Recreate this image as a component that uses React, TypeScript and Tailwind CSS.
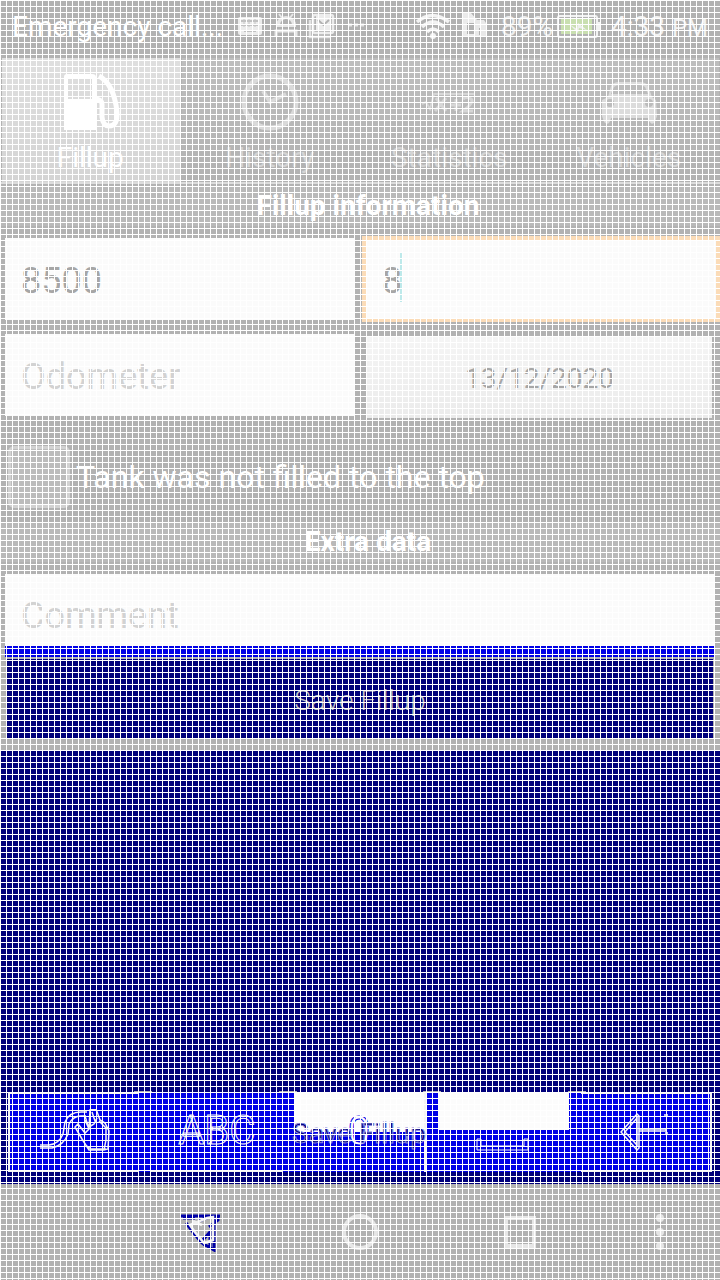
import type { ReactNode } from "react";

type TabProps = { label: string; active?: boolean; children: ReactNode };

function Tab({ label, active = false, children }: TabProps) {
  const look = active
    ? "bg-linear-to-b from-[#dfdfdf] to-[#d4d4d4] text-white"
    : "bg-linear-to-b from-[#bebebe] to-[#b2b2b2] text-[#d4d4d4]";
  return (
    <button
      role="tab"
      aria-selected={active}
      className={`flex flex-1 flex-col items-center border-r border-[#b2b2b2] pt-3 pr-0.5 text-[28px] leading-8 ${look}`}
    >
      <svg viewBox="0 0 64 64" className="size-16" fill="none" aria-hidden="true">
        {children}
      </svg>
      <span className="mt-2">{label}</span>
    </button>
  );
}

function StatusBar() {
  return (
    <header className="flex h-[58px] items-center pb-1 pr-3 pl-3 text-[28px] text-white">
      <span className="w-[224px] whitespace-nowrap">Emergency call...</span>
      <svg viewBox="0 0 134 32" className="h-8 w-[134px] shrink-0" fill="none" aria-hidden="true">
        <rect x="2" y="6" width="24" height="18" rx="2" fill="#ececec" />
        <path d="M5 10h18M5 14h18M8 20h12" stroke="#b2b2b2" strokeWidth="1.500" />
        <path d="M8 8v8M13 8v8M19 8v8" stroke="#c4c4c4" strokeWidth="1" />
        <path d="M40 14a10 9 0 0 1 20 0v2H40z" fill="#e8e8e8" />
        <path d="M43 3l4 5M57 3l-4 5" stroke="#e8e8e8" strokeWidth="2" />
        <path d="M44 14a6 6 0 0 1 12 0z" fill="#b2b2b2" />
        <path d="M40 26v-6h20v6" stroke="#e8e8e8" strokeWidth="3" />
        <path d="M74 9v17h20" stroke="#e4e4e4" strokeWidth="2.500" />
        <rect x="77" y="4" width="20" height="18" rx="2" stroke="#ececec" strokeWidth="2.500" />
        <path d="M80 4h15v15H80z" fill="#ececec" />
        <path d="M82 9l5.500 5L93 9" stroke="#b2b2b2" strokeWidth="2" />
        <path d="M113 14h3M119 14h3M125 14h3" stroke="#e4e4e4" strokeWidth="3" />
      </svg>
      <span className="flex-1" />
      <svg viewBox="0 0 76 32" className="mr-2.5 h-8 w-[76px] shrink-0" fill="none" aria-hidden="true">
        <path d="M2 11q15-13 32 0M7 16q11-10 22 0M12 21q6-6 12 0" stroke="#f2f2f2" strokeWidth="3.500" />
        <circle cx="18" cy="25" r="3" fill="#f2f2f2" />
        <path d="M47 2h9l6 7v17H47z" fill="#ececec" />
        <path d="M52 12h8v11h-8z" fill="#b2b2b2" />
        <path d="M61 9h8l2 3v14H59V11z" fill="#e8e8e8" />
        <path d="M64 17h2v7h-2z" fill="#b2b2b2" />
      </svg>
      <span className="text-[#ececec]">89%</span>
      <svg viewBox="0 0 44 24" className="mr-2.5 ml-1 h-6 w-11 shrink-0" fill="none" aria-hidden="true">
        <rect x="1" y="1" width="39" height="21" rx="2" stroke="#f2f2f2" strokeWidth="2" />
        <path d="M41 7h3v9h-3z" fill="#f2f2f2" />
        <rect x="4" y="4" width="31" height="15" fill="#c9dfb0" />
        <path d="M12 9l8 5 1-6 9 7-8-2-1 5z" fill="#eeeeee" />
      </svg>
      <span className="whitespace-nowrap text-[#f2f2f2]">
        4:33 <span className="text-2xl">PM</span>
      </span>
    </header>
  );
}

function SectionTitle({ children }: { children: ReactNode }) {
  return (
    <h2 className="bg-[#b9b9b9] pl-4 text-center text-[28px] leading-10 font-bold text-white">
      {children}
    </h2>
  );
}

function Keyboard() {
  const key = "relative flex items-center justify-center";
  const tick = "h-px w-[18px] bg-[#b2b2b2]";
  return (
    <section aria-label="Keyboard" className="flex flex-1 flex-col justify-end bg-[#00007a] px-2 pb-3">
      <div aria-hidden="true" className="flex justify-around px-[63px]">
        <span className={tick} />
        <span className={tick} />
        <span className={tick} />
        <span className={tick} />
      </div>
      <div className="grid h-20 grid-cols-5 gap-x-3 bg-[#0000e6]">
        <button aria-label="Gesture input" className={`${key} border-y-2 border-l-2 border-[#f4f4f4]`}>
          <svg viewBox="0 0 74 46" className="h-[46px] w-[74px]" fill="none" stroke="#f4f4f4" strokeWidth="1.500" aria-hidden="true">
            <path d="M2 36h9q10-1 14-11l2-12q4-10 16-10h6M2 39h12q12-3 16-14l1-10q4-8 12-8h5" />
            <path d="M47 7l4 13 1-19 6-1 4 11 5 3 4 8-1 18-4 1H51L44 30l-7-12 3-3 7 9 4-4-4-9M51 18l5-3 3-6M49 37l4 3h15M54 3l3 9M61 12l7 7v12l-2 10" />
          </svg>
        </button>
        <button className={`${key} border-b-2 border-[#f4f4f4] text-[40px] text-[#0000e6] [-webkit-text-stroke:1px_#f4f4f4]`}>
          ABC
        </button>
        <button aria-label="0" className={`${key} border-r-2 border-[#f4f4f4] bg-linear-to-b from-[#fcfcfc] from-50% to-[#0000e6] to-50%`}>
          <span className="text-[40px] text-[#fcfcfc] [-webkit-text-stroke:1px_#0000e6]">0</span>
          <span className="absolute inset-x-0 top-7 flex justify-center text-[28px] leading-7 whitespace-nowrap text-[#00007a] [-webkit-text-stroke:1px_#8888dd]">
            Save Fillup
          </span>
        </button>
        <button aria-label="Space" className={`${key} bg-linear-to-b from-[#fcfcfc] from-48% to-[#0000e6] to-48%`}>
          <svg viewBox="0 0 54 14" className="mt-6 h-3.5 w-[54px]" fill="none" stroke="#f4f4f4" strokeWidth="1" aria-hidden="true">
            <path d="M1 2v11h51V2h-4v7H5V2z" />
          </svg>
        </button>
        <button aria-label="Backspace" className={`${key} border-2 border-l-0 border-[#f4f4f4]`}>
          <svg viewBox="0 0 50 38" className="h-[38px] w-[50px]" fill="none" stroke="#f4f4f4" strokeWidth="1.500" aria-hidden="true">
            <path d="M17 1L1 19l16 18 2-2V3zM17 5v27L5 19zM19 16h27v2M19 18h27M44 2h4M45 20h3" />
          </svg>
        </button>
      </div>
    </section>
  );
}

function NavBar() {
  return (
    <nav className="flex h-24 items-center bg-[#b2b2b2] pl-[120px]">
      <button aria-label="Back" className="flex flex-1 justify-center">
        <svg viewBox="0 0 40 40" className="size-10" fill="none" aria-hidden="true">
          <path d="M1 4h39M3 6h12M6 11l7 9 8 10 5 4M19 9l12-5h7v4l-9 7M34 5v33l-12-7M22 29l8-9v15" stroke="#0000a8" strokeWidth="3" />
          <path d="M10 13l17-7 6-1v23l-9 3-10-12zM13 9l9 4" stroke="#f0f0f0" strokeWidth="2.500" />
        </svg>
      </button>
      <button aria-label="Home" className="flex flex-1 justify-center">
        <span className="size-9 rounded-full border-4 border-[#e6e6e6]" />
      </button>
      <button aria-label="Recent apps" className="flex flex-1 justify-center">
        <span className="size-8 border-4 border-[#e6e6e6]" />
      </button>
      <button aria-label="More options" className="flex w-[120px] flex-col items-center gap-1.5">
        <span className="size-2 rounded-full bg-[#e6e6e6]" />
        <span className="size-2 rounded-full bg-[#e6e6e6]" />
        <span className="size-2 rounded-full bg-[#e6e6e6]" />
      </button>
    </nav>
  );
}

export default function App() {
  const field =
    "block w-full bg-[#fbfbfb] px-4 text-4xl text-[#a6a6a6] outline-none placeholder:text-[#d2d2d2] placeholder:opacity-100";
  return (
    <div className="relative flex min-h-screen flex-col bg-[#b2b2b2] font-['Roboto','Liberation_Sans',sans-serif]">
      <StatusBar />
      <div role="tablist" className="flex h-[126px] border-b-2 border-[#dcdcdc] pl-0.5">
        <Tab label="Fillup" active>
          <path fillRule="evenodd" d="M6 7q0-3 3-3h25q4 0 4 3v53H6V7zM10 9v20h24V9z" fill="#fff" />
          <path d="M41 6q15 8 18 36 1 14-8 14-6 0-7-9V34q0-4-6-5" stroke="#fff" strokeWidth="5" />
        </Tab>
        <Tab label="History">
          <circle cx="32" cy="32" r="26" stroke="#dadada" strokeWidth="5" />
          <path d="M25 21l7 11 16-8" stroke="#dadada" strokeWidth="4" />
        </Tab>
        <Tab label="Statistics">
          <path d="M5 34l4-2 4 7 4-15h41" stroke="#d6d6d6" strokeWidth="2" />
          <path d="M19 28l10 13M29 28L18 41M33 35h11M39 29v12M46 29q4-3 8 0t-8 12h10" stroke="#d6d6d6" strokeWidth="3" />
        </Tab>
        <Tab label="Vehicles">
          <path d="M5 30l6-3 3-11q2-4 8-4h21q6 0 8 4l4 11 4 3 1 16-2 6q-4 5-7-4H14q-2 9-7 4l-2-6z" fill="#dcdcdc" />
          <path d="M14 24l3-7q2-2 6-2h19q4 0 6 2l3 7z" fill="#bcbcbc" />
          <circle cx="13" cy="33" r="4" fill="#bcbcbc" />
          <circle cx="52" cy="33" r="4" fill="#bcbcbc" />
        </Tab>
      </div>

      <main>
        <div className="pt-0.5 pb-[10px]">
          <SectionTitle>Fillup information</SectionTitle>
        </div>
        <div className="grid grid-cols-2 gap-x-1 gap-y-3">
          <div className="pt-0.5 pr-[3px] pl-[5px]">
            <input aria-label="Mileage" defaultValue="8500" className={`${field} h-[82px] pt-1`} />
          </div>
          <div className="relative">
            <input aria-label="Amount of fuel" defaultValue="8" className={`${field} h-[86px] border-4 border-[#fbdcb8] pt-1`} />
            <span className="absolute top-4 left-[38px] h-[50px] w-0.5 bg-[#bde9ea]" />
          </div>
          <div className="pr-[3px] pl-[5px]">
            <input aria-label="Odometer" placeholder="Odometer" className={`${field} h-[82px] pt-1`} />
          </div>
          <div className="pt-0.5 pr-2 pl-[5px]">
            <button className="h-[82px] w-full bg-linear-to-b from-[#f5f5f5] to-[#ebebeb] pt-1 text-[28px] text-[#a6a6a6]">
              13/12/2020
            </button>
          </div>
        </div>

        <label className="mt-7 flex items-center gap-1.5 px-2 text-[32px] leading-10 text-white">
          <input
            type="checkbox"
            className="size-[62px] appearance-none rounded-md border-3 border-[#d2d2d2] bg-[#bcbcbc]"
          />
          Tank was not filled to the top
        </label>

        <div className="pt-3.5 pb-3">
          <SectionTitle>Extra data</SectionTitle>
        </div>
        <div className="px-[5px]">
          <input
            aria-label="Comment"
            placeholder="Comment"
            className={`${field} h-[83px] border-b-11 border-[#0000e6] pt-3`}
          />
        </div>
        <div className="px-[7px] pt-0.5 pb-3">
          <button className="h-20 w-full bg-[#00007a] pt-1 text-[28px] font-light text-[#c2c2c2]">
            Save Fillup
          </button>
        </div>
      </main>

      <Keyboard />
      <NavBar />

      <div
        aria-hidden="true"
        className="pointer-events-none absolute inset-0 bg-[linear-gradient(to_right,#fff_1px,transparent_1px),linear-gradient(to_bottom,#fff_1px,transparent_1px)] bg-[size:6px_6px]"
      />
    </div>
  );
}
